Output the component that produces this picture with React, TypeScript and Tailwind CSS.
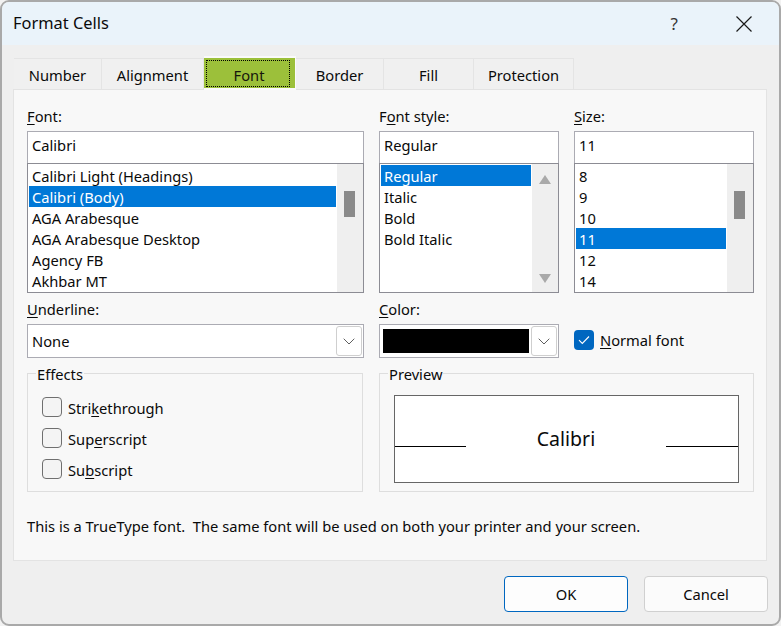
import React from "react";

function Chevron() {
  return (
    <svg width="12" height="7" viewBox="0 0 12 7" fill="none" stroke="#5f5f5f" strokeWidth="1">
      <path d="M0.7 0.7 L6 6 L11.3 0.7" />
    </svg>
  );
}

function DropButton() {
  return (
    <div className="w-[26px] h-[30px] bg-white border border-[#cfcfcf] rounded-[3px] flex items-center justify-center shrink-0">
      <Chevron />
    </div>
  );
}

function Label({ k, rest, pre = "" }: { k: string; rest: string; pre?: string }) {
  return (
    <div className="h-[20px] leading-[18px] mb-[4px] whitespace-nowrap">
      {pre}
      <u className="underline underline-offset-2">{k}</u>
      {rest}
    </div>
  );
}

function TextBox({ value }: { value: string }) {
  return (
    <div className="h-[32px] bg-white border border-b-0 border-[#ababb3] pl-[4px] leading-[26px]">{value}</div>
  );
}

function ListBox({
  items,
  selected,
  mode,
  thumb = 26,
  textPad = "pl-[3px]",
}: {
  items: string[];
  selected: number;
  mode: "thumb" | "arrows";
  thumb?: number;
  textPad?: string;
}) {
  return (
    <div className="h-[130px] bg-white border border-[#8c8c94] flex overflow-hidden">
      <div className="flex-1 min-w-0 pt-px pl-px pr-px overflow-hidden">
        {items.map((t, i) => (
          <div
            key={t}
            className={
              "h-[21px] leading-[23px] whitespace-nowrap " +
              textPad +
              (i === selected ? " bg-[#0078d7] text-white" : "")
            }
          >
            {t}
          </div>
        ))}
      </div>
      {mode === "thumb" ? (
        <div className="w-[26px] shrink-0 bg-[#efefef] pt-[27px] pl-[7px]">
          <div className="w-[11px] bg-[#8a8a8a]" style={{ height: thumb }} />
        </div>
      ) : (
        <div className="w-[26px] shrink-0 bg-[#efefef] pt-[11px] pb-[9px] flex flex-col justify-between items-center">
          <svg width="12" height="9" viewBox="0 0 12 9" fill="#a9a9a9">
            <path d="M6 0 L12 9 L0 9 Z" />
          </svg>
          <svg width="12" height="9" viewBox="0 0 12 9" fill="#a9a9a9">
            <path d="M0 0 L12 0 L6 9 Z" />
          </svg>
        </div>
      )}
    </div>
  );
}

function Check({ k, pre, rest }: { k: string; pre: string; rest: string }) {
  return (
    <div className="flex items-center h-[20px]">
      <div className="w-[20px] h-[20px] rounded-[4px] border border-[#6f6f6f] bg-[#f4f4f4] shrink-0" />
      <span className="ml-[6px] pt-[2px] whitespace-nowrap">
        {pre}
        <u className="underline underline-offset-2">{k}</u>
        {rest}
      </span>
    </div>
  );
}

function Group({ title, className, children }: { title: string; className: string; children: React.ReactNode }) {
  return (
    <div className={"relative h-[119px] border border-[#dedede] " + className}>
      <span className="absolute left-[8px] top-[-10px] leading-[20px] bg-[#f8f8f8] px-px">{title}</span>
      {children}
    </div>
  );
}

const tabs: [string, string][] = [
  ["Number", "w-[88px]"],
  ["Alignment", "w-[102px]"],
  ["Font", "w-[92px]"],
  ["Border", "w-[88px]"],
  ["Fill", "w-[90px]"],
  ["Protection", "w-[100px]"],
];

export default function App() {
  return (
    <div
      className="w-[781px] h-[626px] bg-[#f2f2f2] text-[14.7px] text-[#0a0a0a] overflow-hidden"
      style={{ fontFamily: '"Noto Sans", "Open Sans", sans-serif' }}
    >
      <div className="h-[626px] border-2 border-[#a9a9a9] rounded-[9px] bg-[#efefef] overflow-hidden flex flex-col">
        {/* title bar */}
        <div className="h-[43px] shrink-0 bg-[#eaf3fa] flex items-center pl-[11px] pr-[27px]">
          <span className="text-[16.4px]">Format Cells</span>
          <span className="ml-auto text-[17px] text-[#333] leading-none">?</span>
          <svg className="ml-[58px]" width="16" height="16" viewBox="0 0 16 16" fill="none" stroke="#1a1a1a" strokeWidth="1.2">
            <path d="M0.5 0.5 L15.5 15.5 M15.5 0.5 L0.5 15.5" />
          </svg>
        </div>

        {/* tabs */}
        <div className="mt-[11px] ml-[12px] h-[33px] shrink-0 flex items-end relative z-10">
          {tabs.map(([t, w]) =>
            t === "Font" ? (
              <div key={t} className={w + " h-[34px] -mb-px bg-[#fafafa] pt-[2px] pr-px shrink-0"}>
                <div className="h-[30px] bg-[#9cc03a] pt-[2px] pl-[2px] pr-[5px]">
                  <div className="h-[27px] border border-dotted border-black flex items-center justify-center text-[#16160c] leading-none pl-[2px] pt-[3px]">
                    {t}
                  </div>
                </div>
              </div>
            ) : (
              <div
                key={t}
                className={w + " h-[31px] shrink-0 bg-[#f0f0f0] border-t border-r border-[#e4e4e4] flex items-center justify-center leading-none pt-[3px]"}
              >
                {t}
              </div>
            )
          )}
        </div>

        {/* panel */}
        <div className="ml-[11px] w-[754px] h-[472px] shrink-0 bg-[#f8f8f8] border border-[#e3e3e3] pl-[13px] pt-[17px]">
          <div className="grid grid-cols-[337px_180px_180px] gap-x-[15px]">
            <div>
              <Label k="F" rest="ont:" />
              <TextBox value="Calibri" />
              <ListBox
                mode="thumb"
                selected={1}
                items={[
                  "Calibri Light (Headings)",
                  "Calibri (Body)",
                  "AGA Arabesque",
                  "AGA Arabesque Desktop",
                  "Agency FB",
                  "Akhbar MT",
                ]}
              />
            </div>
            <div>
              <Label pre="F" k="o" rest="nt style:" />
              <TextBox value="Regular" />
              <ListBox mode="arrows" selected={0} textPad="pl-[3px]" items={["Regular", "Italic", "Bold", "Bold Italic"]} />
            </div>
            <div>
              <Label k="S" rest="ize:" />
              <TextBox value="11" />
              <ListBox mode="thumb" thumb={28} selected={3} items={["8", "9", "10", "11", "12", "14"]} />
            </div>

            {/* second row */}
            <div className="mt-[7px]">
              <Label k="U" rest="nderline:" />
              <div className="h-[34px] bg-white border border-[#ababb3] flex items-center pl-[4px] pr-[1px]">
                <span className="flex-1">None</span>
                <DropButton />
              </div>
            </div>
            <div className="mt-[7px]">
              <Label k="C" rest="olor:" />
              <div className="h-[34px] bg-white border border-[#ababb3] flex items-center pl-[3px] pr-[1px] gap-[2px]">
                <div className="flex-1 h-[24px] bg-black" />
                <DropButton />
              </div>
            </div>
            <div className="mt-[7px] pt-[30px]">
              <div className="flex items-center h-[20px]">
                <div className="w-[20px] h-[20px] rounded-[4px] bg-[#0067c0] flex items-center justify-center shrink-0">
                  <svg width="12" height="10" viewBox="0 0 12 10" fill="none" stroke="#ffffff" strokeWidth="1.1">
                    <path d="M1 5.2 L4.3 8.5 L11 1.5" />
                  </svg>
                </div>
                <span className="ml-[6px] whitespace-nowrap">
                  <u className="underline underline-offset-2">N</u>ormal font
                </span>
              </div>
            </div>

            {/* third row */}
            <Group title="Effects" className="mt-[15px] w-[336px] pl-[14px] pt-[23px]">
              <div className="flex flex-col gap-[11px]">
                <Check pre="Stri" k="k" rest="ethrough" />
                <Check pre="Sup" k="e" rest="rscript" />
                <Check pre="Su" k="b" rest="script" />
              </div>
            </Group>
            <Group title="Preview" className="mt-[15px] col-span-2 pl-[14px] pt-[21px]">
              <div className="w-[345px] h-[88px] bg-white border border-[#666666] flex items-center">
                <div className="w-[71px] h-px bg-black mt-[14px] shrink-0" />
                <div className="flex-1 text-center text-[19.5px] leading-none">Calibri</div>
                <div className="w-[72px] h-px bg-black mt-[14px] shrink-0" />
              </div>
            </Group>
          </div>
          <div className="mt-[25px] h-[20px] leading-[18px] whitespace-pre">
            This is a TrueType font.  The same font will be used on both your printer and your screen.
          </div>
        </div>

        {/* buttons */}
        <div className="mt-[15px] flex justify-end gap-[16px] pr-[11px]">
          <button className="w-[124px] h-[36px] bg-[#fdfdfd] border border-[#0067c0] rounded-[4px]">OK</button>
          <button className="w-[124px] h-[36px] bg-[#fbfbfb] border border-[#d0d0d0] rounded-[4px]">Cancel</button>
        </div>
      </div>
    </div>
  );
}
